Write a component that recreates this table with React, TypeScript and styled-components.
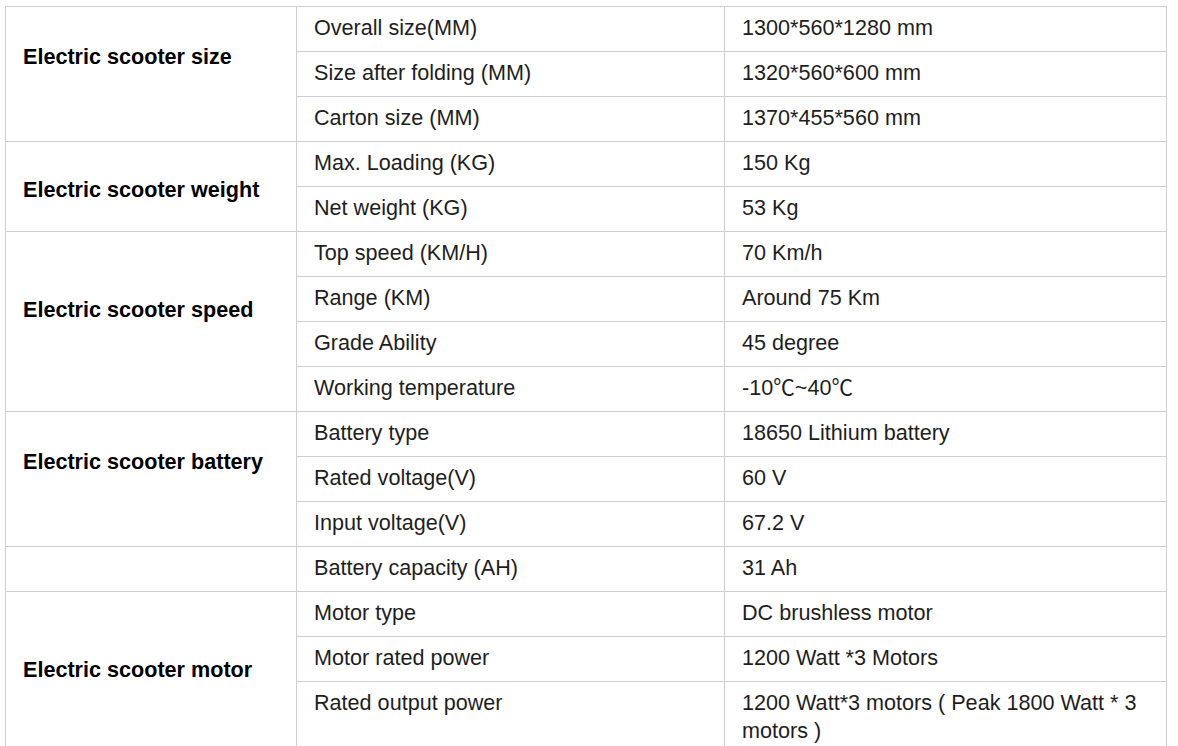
import * as React from 'react'
import styled, { createGlobalStyle } from 'styled-components'

const GlobalStyle = createGlobalStyle`
    html, body {
        margin: 0;
        padding: 0;
        background: white;
    }
    body {
        padding: 6px 0 0 5px;
        font-family: 'Liberation Sans', Arial, 'Noto Sans CJK SC', sans-serif;
    }
`

const SpecTable = styled.table`
    width: 1161px;
    table-layout: fixed;
    border-collapse: collapse;
    border: 1px solid #cfcfcf;
    font-size: 21.6px;
    line-height: 28px;
    color: #1e1e1e;
`

const Col = styled.col<{ $width: number }>`
    width: ${(p) => p.$width}px;
`

const Cell = styled.td`
    border: 1px solid #cfcfcf;
    padding: 7px 17px 9px 17px;
    vertical-align: top;
`

// $lift moves the group name up from the middle of its rows
const GroupCell = styled.td<{ $lift: number }>`
    border: 1px solid #cfcfcf;
    padding: 8px 17px ${(p) => 8 + p.$lift * 2}px 17px;
    vertical-align: middle;
    font-weight: bold;
    color: #000;
`

type TSpec = [string, string]

type TGroup = {
    name: string
    lift: number
    specs: TSpec[]
}

const groups: TGroup[] = [
    {
        name: 'Electric scooter size',
        lift: 17,
        specs: [
            ['Overall size(MM)', '1300*560*1280 mm'],
            ['Size after folding (MM)', '1320*560*600 mm'],
            ['Carton size (MM)', '1370*455*560 mm'],
        ],
    },
    {
        name: 'Electric scooter weight',
        lift: -3,
        specs: [
            ['Max. Loading (KG)', '150 Kg'],
            ['Net weight (KG)', '53 Kg'],
        ],
    },
    {
        name: 'Electric scooter speed',
        lift: 12,
        specs: [
            ['Top speed (KM/H)', '70 Km/h'],
            ['Range (KM)', 'Around 75 Km'],
            ['Grade Ability', '45 degree'],
            ['Working temperature', '-10\u2103~40\u2103'],
        ],
    },
    {
        name: 'Electric scooter battery',
        lift: 17,
        specs: [
            ['Battery type', '18650 Lithium battery'],
            ['Rated voltage(V)', '60 V'],
            ['Input voltage(V)', '67.2 V'],
        ],
    },
    {
        name: '',
        lift: 0,
        specs: [['Battery capacity (AH)', '31 Ah']],
    },
    {
        name: 'Electric scooter motor',
        lift: 3,
        specs: [
            ['Motor type', 'DC brushless motor'],
            ['Motor rated power', '1200 Watt *3 Motors'],
            ['Rated output power', '1200 Watt*3 motors ( Peak 1800 Watt * 3 motors )'],
        ],
    },
]

const App: React.FunctionComponent = (): JSX.Element => {
    return (
        <>
            <GlobalStyle />
            <SpecTable>
                <colgroup>
                    <Col $width={291} />
                    <Col $width={428} />
                    <Col $width={442} />
                </colgroup>
                <tbody>
                    {groups.map((group) =>
                        group.specs.map(([label, value], i) => (
                            <tr key={group.name + label}>
                                {i === 0 && (
                                    <GroupCell rowSpan={group.specs.length} $lift={group.lift}>
                                        {group.name}
                                    </GroupCell>
                                )}
                                <Cell>{label}</Cell>
                                <Cell>{value}</Cell>
                            </tr>
                        ))
                    )}
                </tbody>
            </SpecTable>
        </>
    )
}

export default App
